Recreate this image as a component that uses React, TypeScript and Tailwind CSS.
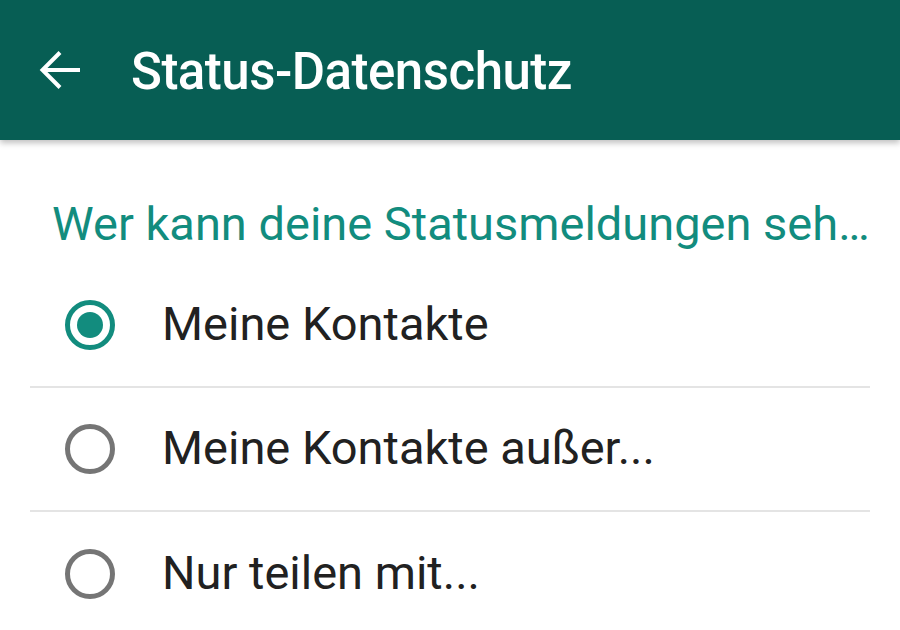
const options = [
  { label: "Meine Kontakte", checked: true },
  { label: "Meine Kontakte außer...", checked: false },
  { label: "Nur teilen mit...", checked: false },
];

export default function App() {
  return (
    <div className="w-[900px] h-[630px] overflow-hidden bg-white font-['Roboto',sans-serif]">
      {/* Toolbar */}
      <header className="relative z-10 h-[140px] bg-[#075e54] flex items-center shadow-[0_3px_6px_rgba(0,0,0,0.25)]">
        <div className="w-[131px] flex justify-center pr-[11px]">
          <svg viewBox="0 0 24 24" className="w-[60px] h-[60px]" fill="none" stroke="white" strokeWidth={1.6}>
            <path d="M20 12H5M12 5l-7 7 7 7" />
          </svg>
        </div>
        <h1 className="text-white text-[51px] font-medium tracking-[-0.5px] pt-[5px]">Status-Datenschutz</h1>
      </header>

      {/* Section */}
      <div className="pt-[52px] px-[30px]">
        <p className="pl-[22px] text-[#128c7e] text-[47px] leading-[64px] whitespace-nowrap">
          Wer kann deine Statusmeldungen seh…
        </p>
        <div className="mt-[8px]">
          {options.map((o, i) => (
            <div key={i} className={`h-[124px] flex items-center ${i < options.length - 1 ? "border-b-2 border-[#e4e4e4]" : ""}`}>
              <div className="w-[132px] flex justify-center pr-[12px]">
                <span
                  className={`w-[50px] h-[50px] rounded-full border-[5px] flex items-center justify-center ${o.checked ? "border-[#128c7e]" : "border-[#757575]"}`}
                >
                  {o.checked && <span className="w-[26px] h-[26px] rounded-full bg-[#128c7e]" />}
                </span>
              </div>
              <span className="text-[#212121] text-[47px] pb-[2px]">{o.label}</span>
            </div>
          ))}
        </div>
      </div>
    </div>
  );
}
